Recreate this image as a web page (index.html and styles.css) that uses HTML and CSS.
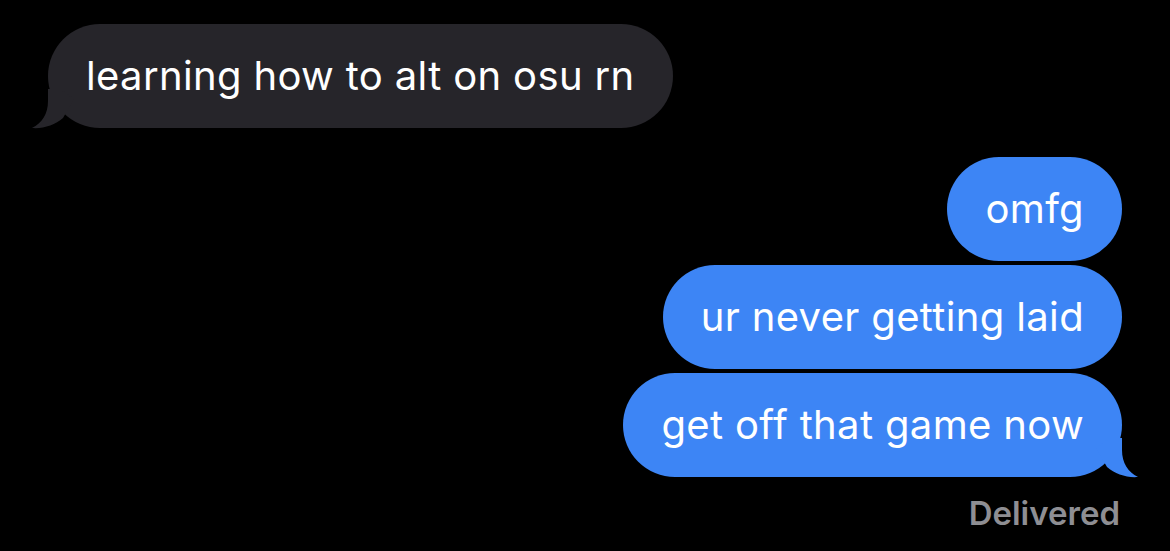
FILE: index.html
```html
<!DOCTYPE html>
<html lang="en">
<head>
    <meta charset="UTF-8">
    <meta name="viewport" content="width=device-width, initial-scale=1.0">
    <title>Messages</title>
    <link rel="stylesheet" href="styles.css">
</head>
<body>
    <div class="thread">
        <div class="bubble received tailed">
            learning how to alt on osu rn
            <svg class="tail" viewBox="0 0 50 40" width="50" height="40">
                <path d="M18,0 L18,12 C18,25 12,34 2,39 C13,40 25,36 33,29 L44,10 L30,0 Z"/>
            </svg>
        </div>

        <div class="group">
            <div class="bubble sent">omfg</div>
            <div class="bubble sent">ur never getting laid</div>
            <div class="bubble sent tailed">
                get off that game now
                <svg class="tail" viewBox="0 0 50 40" width="50" height="40">
                    <path d="M18,0 L18,12 C18,25 12,34 2,39 C13,40 25,36 33,29 L44,10 L30,0 Z"/>
                </svg>
            </div>
        </div>

        <div class="status">Delivered</div>
    </div>
</body>
</html>
```

FILE: styles.css
```css
body {
    margin: 0;
    background-color: #000;
    font-family: Inter, "Noto Sans", sans-serif;
}

.thread {
    display: flex;
    flex-direction: column;
    padding: 24px 48px 0 48px;
}

.group {
    display: flex;
    flex-direction: column;
    align-items: flex-end;
    gap: 4px;
    margin-top: 29px;
}

.bubble {
    position: relative;
    padding: 29px 38px;
    line-height: 46px;
    font-size: 40px;
    letter-spacing: 0.35px;
    color: #fff;
    border-radius: 52px;
    white-space: nowrap;
}

.received {
    align-self: flex-start;
    background-color: #26252a;
}

.sent {
    background-color: #3d85f5;
}

.tail {
    position: absolute;
    bottom: -1px;
    display: block;
}

.received .tail {
    left: -18px;
    fill: #26252a;
}

.sent .tail {
    right: -18px;
    fill: #3d85f5;
    transform: scaleX(-1);
}

.status {
    align-self: flex-end;
    margin-top: 16px;
    margin-right: 2px;
    font-size: 33px;
    font-weight: 600;
    color: #8e8e93;
}
```
